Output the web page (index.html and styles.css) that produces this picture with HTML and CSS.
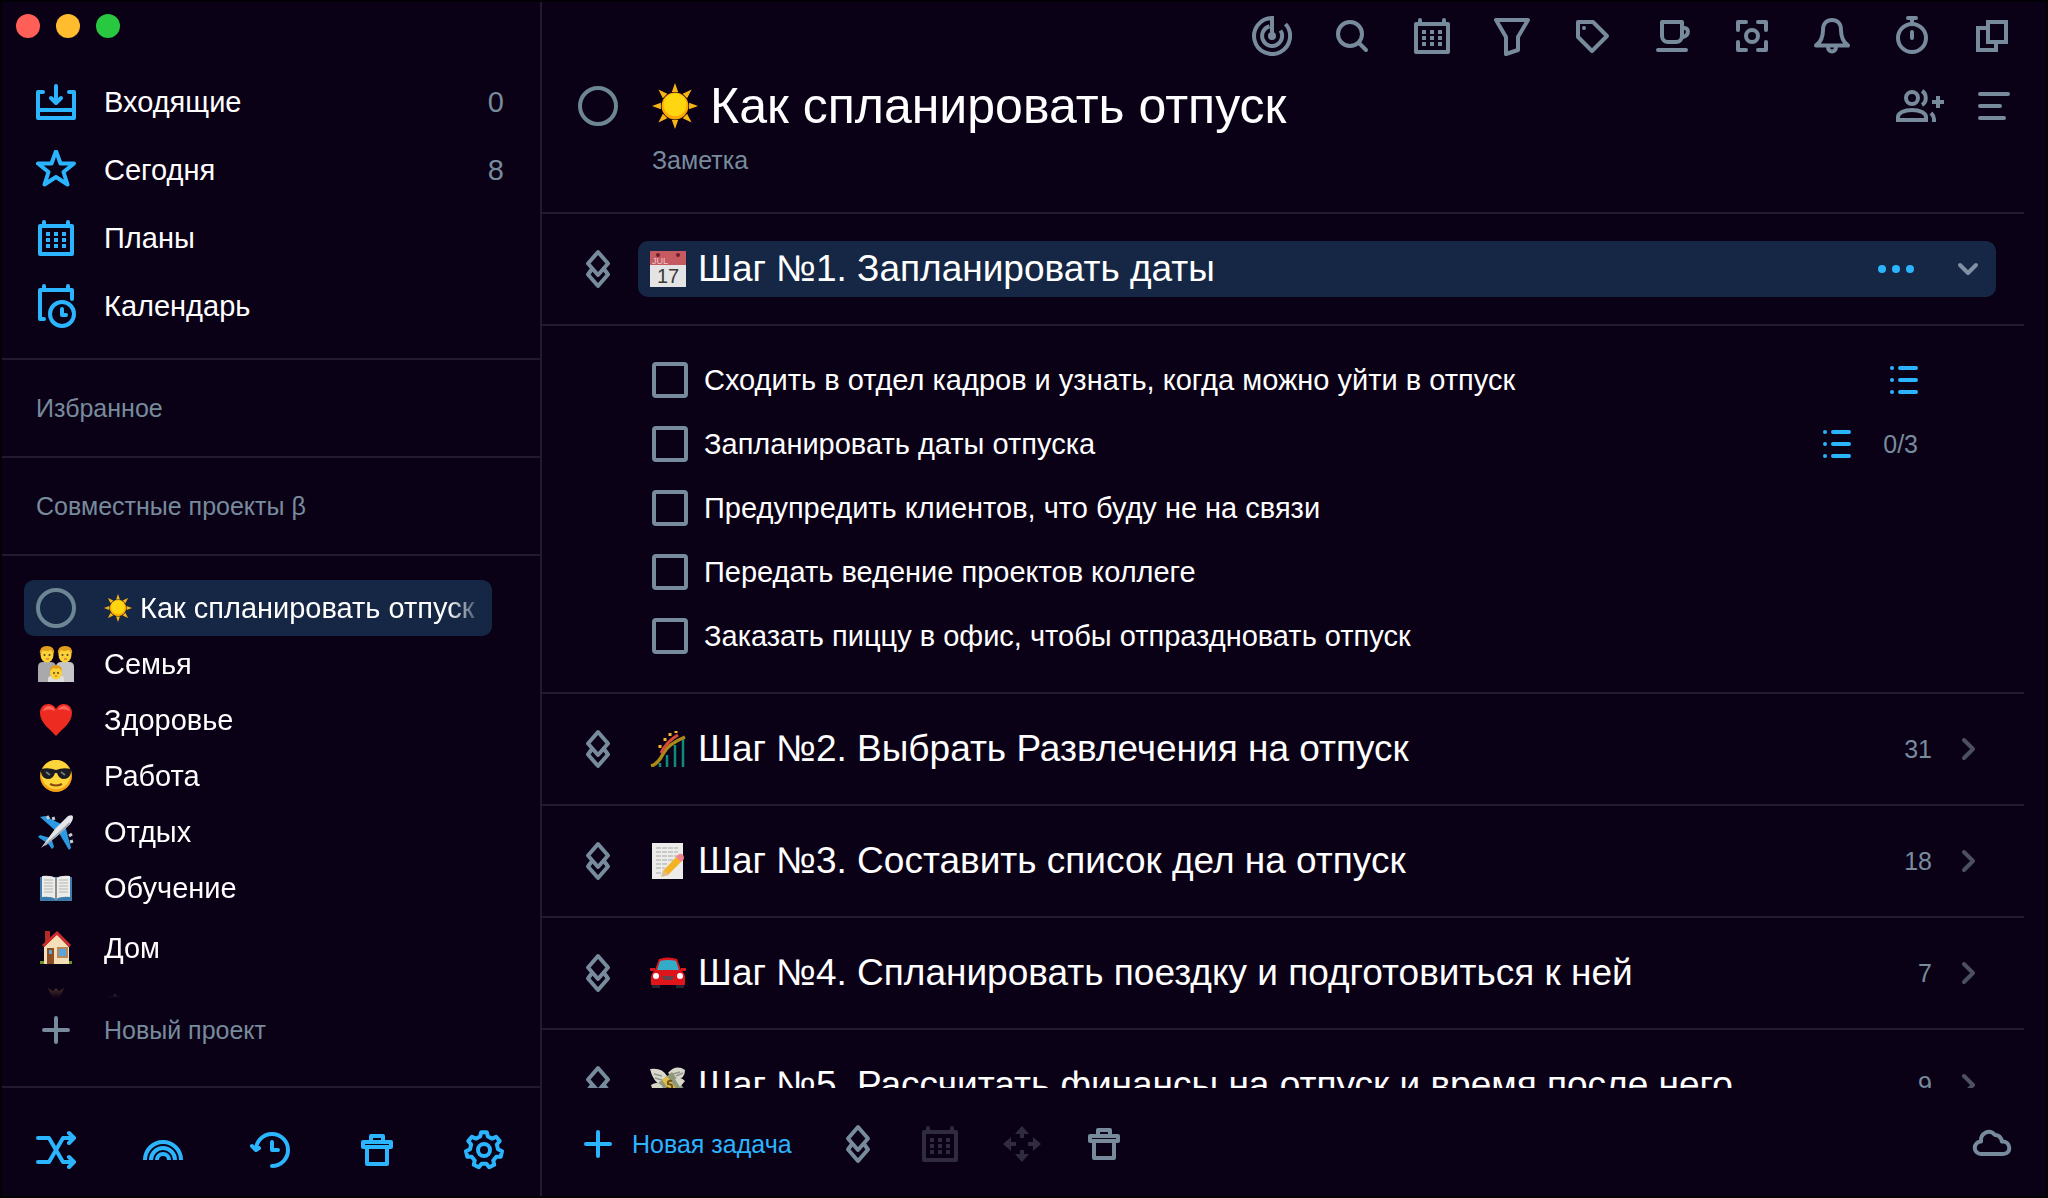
FILE: index.html
```html
<!DOCTYPE html>
<html lang="ru">
<head>
    <meta charset="UTF-8">
    <meta name="viewport" content="width=device-width, initial-scale=1.0">
    <title>Как спланировать отпуск</title>
    <link rel="stylesheet" href="styles.css">
</head>
<body>
    <!-- Набор иконок -->
    <svg class="sprite" aria-hidden="true">
        <symbol id="i-inbox" viewBox="0 0 40 40"><path d="M7 10H2v26h36V10h-5M2 28h36"/><path d="M20 4v16M15 16l5 5 5-5"/></symbol>
        <symbol id="i-star" viewBox="0 0 40 40"><path d="M20 1l4.500 12.500H38L27.500 22l4 12.500L20 27 8.500 34.500l4-12.500L2 13.500h13.500z"/></symbol>
        <symbol id="i-cal" viewBox="0 0 40 40"><path d="M4 8h32v28H4zM8 4v4M32 4v4"/><path class="solid" d="M10 14h4v4h-4zM18 14h4v4h-4zM26 14h4v4h-4zM10 20h4v4h-4zM18 20h4v4h-4zM26 20h4v4h-4zM10 26h4v4h-4zM18 26h4v4h-4zM26 26h4v4h-4z"/></symbol>
        <symbol id="i-schedule" viewBox="0 0 40 40" overflow="visible"><path d="M8 33H4V4h32v9M8 0v4M32 0v4"/><circle cx="26" cy="28" r="12"/><path d="M26 23v6h4"/></symbol>
        <symbol id="i-plus" viewBox="0 0 40 40"><path d="M20 8v24M8 20h24"/></symbol>
        <symbol id="i-shuffle" viewBox="0 0 40 40"><path d="M2 8h11l14 24h11M2 32h11L27 8h11M33 3l5 5-5 5M33 27l5 5-5 5"/></symbol>
        <symbol id="i-rainbow" viewBox="0 0 40 40"><path class="flat" d="M2 30a18 18 0 0 1 36 0M8 30a12 12 0 0 1 24 0M14 30a6 6 0 0 1 12 0"/></symbol>
        <symbol id="i-history" viewBox="0 0 40 40"><path d="M6 20a16 16 0 1 1 16 16M2 16l4 4 3-2M22 12v8h6"/></symbol>
        <symbol id="i-trash" viewBox="0 0 40 40"><path d="M6 12h28v5H6zM14 11V6h12v5M10 18v16h20V18"/></symbol>
        <symbol id="i-gear" viewBox="0 0 40 40"><path d="M17.200 2.200L22.800 2.200 23.900 6.500 28.100 8.600 32.100 6.700 35.700 11.100 32.900 14.600 34 19.200 38 21.200 36.700 26.700 32.300 26.800 29.300 30.500 30.200 34.800 25.200 37.200 22.400 33.800 17.600 33.800 14.800 37.200 9.800 34.800 10.700 30.500 7.700 26.800 3.300 26.700 2 21.200 6 19.200 7.100 14.600 4.300 11.100 7.900 6.700 11.900 8.600 16.100 6.500z"/><circle cx="20" cy="20" r="6"/></symbol>
        <symbol id="i-radar" viewBox="0 0 40 40"><path class="flat" d="M20 20V2A18 18 0 1 0 33.500 8M17.500 10.300A10 10 0 1 0 28.500 14.500"/><circle class="solid" cx="20" cy="20" r="4"/></symbol>
        <symbol id="i-search" viewBox="0 0 40 40"><circle cx="18" cy="18" r="12"/><path d="M27 27l7 7"/></symbol>
        <symbol id="i-filter" viewBox="0 0 40 40"><path d="M4 4h32L26 21v13l-12 4V21z"/></symbol>
        <symbol id="i-tag" viewBox="0 0 40 40"><path d="M6 6h15l14 14-15 15L6 21z"/><circle class="solid" cx="12" cy="12" r="2"/></symbol>
        <symbol id="i-cup" viewBox="0 0 40 40"><path d="M10 6h20v14a6 6 0 0 1-6 6h-8a6 6 0 0 1-6-6zM31 12c6-1 7 7 0 9M6 34h28"/></symbol>
        <symbol id="i-focus" viewBox="0 0 40 40"><path d="M14 6H6v8M26 6h8v8M14 34H6v-8M26 34h8v-8"/><circle cx="20" cy="20" r="6"/></symbol>
        <symbol id="i-bell" viewBox="0 0 40 40"><path d="M4 29.500C9 26 11 21 11 14c0-7 4-10 9-10s9 3 9 10c0 7 2 12 7 15.500zM16 31c0 6 8 6 8 0"/></symbol>
        <symbol id="i-timer" viewBox="0 0 40 40"><circle cx="20" cy="22" r="14"/><path d="M16 2h8M20 2v6M20 16v6"/></symbol>
        <symbol id="i-windows" viewBox="0 0 40 40"><path class="flat" d="M16 6h18v20H16zM15 12H6v22h18v-7"/></symbol>
        <symbol id="i-people" viewBox="0 0 48 40"><circle cx="16" cy="12" r="6"/><path class="flat" d="M2 34v-3c0-4 6-7 14-7s14 3 14 7v3zM42 10v12M36 16h12M38 36v-3c0-2-1-4-3-6M26 5c5 3 5 11 0 14"/></symbol>
        <symbol id="i-menu" viewBox="0 0 40 40"><path d="M8 8h28M8 20h20M8 32h24"/></symbol>
        <symbol id="i-step" viewBox="0 0 40 40"><path d="M20 3l10 11.500L20 26 10 14.500zM14 20l-4 5.500L20 37l10-11.500-4-5.500"/></symbol>
        <symbol id="i-list" viewBox="0 0 28 28"><path d="M10 2h16M10 14h16M10 26h16M2 2h.01M2 14h.01M2 26h.01"/></symbol>
        <symbol id="i-dots" viewBox="0 0 40 40"><g class="solid"><circle cx="6" cy="20" r="4"/><circle cx="20" cy="20" r="4"/><circle cx="34" cy="20" r="4"/></g></symbol>
        <symbol id="i-down" viewBox="0 0 40 40"><path d="M12 16l8 8 8-8"/></symbol>
        <symbol id="i-right" viewBox="0 0 40 40"><path d="M16 11l9 9-9 9"/></symbol>
        <symbol id="i-move" viewBox="0 0 40 40"><path class="solid" d="M20 2l7 8h-5v4h-4v-4h-5zM20 38l-7-8h5v-4h4v4h5zM1 20l8-7v5h5v4H9v5zM39 20l-8 7v-5h-5v-4h5v-5z"/></symbol>
        <symbol id="i-cloud" viewBox="0 0 40 40"><path d="M9 30a6 6 0 0 1 0-12.500C8 10 17 4 23 11c4 0 6 2 7 6.500C39 17 40 30 31 30z"/></symbol>

        <!-- Цветные значки -->
        <symbol id="e-sun" viewBox="0 0 36 36"><path fill="#f7b416" d="M18 0l2.500 7h-5zM18 36l2.500-7h-5zM0 18l7-2.500v5zM36 18l-7-2.500v5zM5 5l7 3.500L8.500 12zM31 5l-7 3.500 3.500 3.500zM5 31l7-3.500L8.500 24zM31 31l-7-3.500 3.500-3.500z"/><circle cx="18" cy="18" r="10.500" fill="#ffa800"/><circle cx="18" cy="17" r="9" fill="#ffd60f"/></symbol>
        <symbol id="e-family" viewBox="0 0 36 36"><path fill="#a9a9ab" d="M0 36V21q0-5 5-5h8q4 0 5 4v16z"/><path fill="#c6c6c8" d="M18 36V20q1-4 5-4h8q5 0 5 5v15z"/><path fill="#dededf" d="M10 36v-3q0-3 3-3h10q3 0 3 3v3z"/><g fill="#fbd137"><ellipse cx="9" cy="8.500" rx="6.500" ry="8"/><ellipse cx="27" cy="8.500" rx="6.500" ry="8"/><ellipse cx="18" cy="26.500" rx="6" ry="7"/></g><path fill="#e09d1b" d="M2 8q-1-8 7-8t7 8l-3-4q-5 2-8 0zM20 8q-1-8 7-8t7 8l-3-4q-5 2-8 0zM12 25q0-6 6-6t6 6l-3-3q-3 1-6 0z"/><g fill="#59401c"><circle cx="6.500" cy="9" r="1"/><circle cx="11.500" cy="9" r="1"/><circle cx="24.500" cy="9" r="1"/><circle cx="29.500" cy="9" r="1"/><circle cx="16" cy="27" r="1"/><circle cx="20" cy="27" r="1"/></g><path stroke="#c1592b" stroke-width="1.200" d="M8 13h3M26 13h3M17 30h2"/></symbol>
        <symbol id="e-heart" viewBox="0 0 36 36"><path fill="#ee2b20" d="M18 34C12 27 2 21 2 11 2 1 14-1 18 7c4-8 16-6 16 4 0 10-10 16-16 23z"/><path fill="#ff665c" d="M5 9q1-5 6-5t6 5q-6-3-12 0zM20 8q2-4 6-4t6 5q-6-3-12-1z"/></symbol>
        <symbol id="e-cool" viewBox="0 0 36 36"><circle cx="18" cy="18" r="16" fill="#f5a314"/><circle cx="18" cy="16.500" r="14.500" fill="#ffd53c"/><path fill="#1b1c22" d="M3 11q8-2 15 1 7-3 15-1v3q-1 7-7 7-5 0-7-6h-2q-2 6-7 6-6 0-7-7z"/><path stroke="#70757e" stroke-width="2" d="M8 14l4 3M23 14l4 3"/><path stroke="#8b4a11" stroke-width="2" fill="none" d="M12 26q6 3 12 0"/></symbol>
        <symbol id="e-plane" viewBox="0 0 36 36"><path fill="#2a9be2" d="M2 3l5-1 18 9-6 7zM33 34l-2 2-10-17 6-8zM0 23l2-2 10 3-3 5zM14 35l2-2-3-10-5 4z"/><path stroke="#c4ccd3" stroke-width="3" d="M9 2l2 3M15 3l1 3M34 20l-3 2M35 27l-3 1"/><path fill="#e4e6e8" d="M3 34l14-19L30 2q5-2 5 1 0 4-4 8L18 23z"/><path stroke="#a3a9af" stroke-width="2" d="M7 31l12-10L32 9"/></symbol>
        <symbol id="e-book" viewBox="0 0 36 36"><path fill="#3b7cab" d="M2 7h32v24H2z"/><path fill="#ececea" d="M4 6q9-1 14 2 5-3 14-2v21q-9-1-14 2-5-3-14-2z"/><path fill="#8b8c8e" d="M17 8h2v22h-2z"/><path stroke="#b4b4b4" stroke-width="1" d="M6 10h9M6 13h9M6 16h9M6 19h9M6 22h9M21 10h9M21 13h9M21 16h9M21 19h9M21 22h9"/></symbol>
        <symbol id="e-house" viewBox="0 0 36 36"><path fill="#68952a" d="M2 31h32v3H2z"/><path fill="#b22c26" d="M7 1h5v12H7z"/><path fill="#f5dfb9" d="M6 17L19 4l12 13v17H6z"/><path fill="none" stroke="#ce2b2b" stroke-width="3" d="M5 16L19 3l13 13"/><path fill="#8d4e25" d="M9 18h7v16H9z"/><path fill="#b98859" d="M19 17h11v11H19z"/><path fill="#5ca5dc" d="M21 19h7v7h-7zM11 20h3v4h-3z"/></symbol>
        <symbol id="e-money" viewBox="0 0 36 36"><path fill="#b58354" d="M10 2l5 3 3-3 3 3 5-3-4 9q11 9 9 19-1 5-13 5T5 30q-2-10 9-19z"/></symbol>
        <symbol id="e-coaster" viewBox="0 0 36 36"><path stroke="#118a7e" stroke-width="2.500" d="M10 32v4M17 24v12M25 14v22M33 7v29"/><path fill="none" stroke="#a98a16" stroke-width="3.500" d="M1 35q7-2 12-12T35 6"/><path fill="none" stroke="#d94b34" stroke-width="3" d="M11 22Q17 10 28 4"/><path stroke="#f5b62a" stroke-width="3" d="M10 17v-3M15 10V7M20 5V2M26 2V0"/></symbol>
        <symbol id="e-memo" viewBox="0 0 36 36"><path fill="#ececea" d="M2 0h31v36H2z"/><path stroke="#a5a5a5" stroke-width="1.200" stroke-dasharray="5 1" d="M6 5h22M6 9h22M6 13h23M6 17h22M6 21h12M6 25h9M6 30h6"/><path fill="#f4b325" d="M13 28L28 12l5 5-15 15z"/><path fill="#f1848e" d="M26 14l3-3q5-1 5 5l-3 3z"/><path fill="#dfbd88" d="M11 34l2-7 6 5z"/></symbol>
        <symbol id="e-car" viewBox="0 0 36 36"><path fill="#242733" d="M2 26h8v7H2zM26 26h8v7h-8z"/><path fill="#de151a" d="M9 4q9-3 18 0l4 11q4 3 4 8v7H1v-7q0-5 4-8zM0 13h5v3H0zM31 13h5v3h-5z"/><path fill="#33acca" d="M10 6q8-2 16 0l3 9H7z"/><path fill="#64454b" d="M12 21h12l-2 4h-8z"/><circle cx="6" cy="21" r="3" fill="#fff"/><circle cx="30" cy="21" r="3" fill="#fff"/></symbol>
        <symbol id="e-cash" viewBox="0 0 36 36"><path fill="#d8d9ca" d="M0 2q12-2 17 7l-5 10Q3 15 0 2zM18 6q8-9 17-3 0 8-8 10z"/><path fill="#90987a" d="M7 17L22 5l13 18-16 12z"/><path fill="#d6d7c6" d="M1 18q8-5 12 3l-3 6Q3 26 1 18zM25 12q6-3 10 2l-5 6z"/><path fill="#e3bd46" d="M12 13l5-4 13 18-5 4z"/><path stroke="#94968b" stroke-width="1.500" fill="none" d="M4 7l8 2M5 11l7 2M23 7l7-2M26 9l7-3"/><path stroke="#6c531c" stroke-width="2" fill="none" d="M22 14q-5-1-4 3 5 0 4 4-3 2-5-1"/></symbol>
    </svg>

    <div class="app">
        <aside class="sidebar">
            <div class="window-controls">
                <button class="dot dot-close" aria-label="Закрыть"></button>
                <button class="dot dot-min" aria-label="Свернуть"></button>
                <button class="dot dot-max" aria-label="Развернуть"></button>
            </div>

            <nav class="main-nav">
                <a class="nav-item" href="#"><svg class="icon"><use href="#i-inbox"/></svg><span>Входящие</span><span class="count">0</span></a>
                <a class="nav-item" href="#"><svg class="icon"><use href="#i-star"/></svg><span>Сегодня</span><span class="count">8</span></a>
                <a class="nav-item" href="#"><svg class="icon"><use href="#i-cal"/></svg><span>Планы</span></a>
                <a class="nav-item" href="#"><svg class="icon"><use href="#i-schedule"/></svg><span>Календарь</span></a>
            </nav>

            <h2 class="section-title">Избранное</h2>
            <h2 class="section-title">Совместные проекты β</h2>

            <div class="projects">
                <div class="project-scroll">
                    <ul class="project-list">
                        <li class="project active">
                            <input class="round-check" type="checkbox" aria-label="Завершить проект">
                            <a class="project-name" href="#"><svg class="emoji-small"><use href="#e-sun"/></svg>Как спланировать отпуск</a>
                        </li>
                        <li class="project"><svg class="emoji"><use href="#e-family"/></svg><a class="project-name" href="#">Семья</a></li>
                        <li class="project"><svg class="emoji"><use href="#e-heart"/></svg><a class="project-name" href="#">Здоровье</a></li>
                        <li class="project"><svg class="emoji"><use href="#e-cool"/></svg><a class="project-name" href="#">Работа</a></li>
                        <li class="project"><svg class="emoji"><use href="#e-plane"/></svg><a class="project-name" href="#">Отдых</a></li>
                        <li class="project"><svg class="emoji"><use href="#e-book"/></svg><a class="project-name" href="#">Обучение</a></li>
                    </ul>
                    <ul class="project-list">
                        <li class="project"><svg class="emoji"><use href="#e-house"/></svg><a class="project-name" href="#">Дом</a></li>
                        <li class="project"><svg class="emoji"><use href="#e-money"/></svg><a class="project-name" href="#">Финансы</a></li>
                    </ul>
                </div>
                <button class="new-project"><svg class="icon"><use href="#i-plus"/></svg>Новый проект</button>
            </div>

            <div class="sidebar-footer">
                <button aria-label="Перемешать"><svg class="icon"><use href="#i-shuffle"/></svg></button>
                <button aria-label="Радуга"><svg class="icon"><use href="#i-rainbow"/></svg></button>
                <button aria-label="История"><svg class="icon"><use href="#i-history"/></svg></button>
                <button aria-label="Корзина"><svg class="icon"><use href="#i-trash"/></svg></button>
                <button aria-label="Настройки"><svg class="icon"><use href="#i-gear"/></svg></button>
            </div>
        </aside>

        <main class="content">
            <div class="toolbar">
                <button aria-label="Радар"><svg class="icon"><use href="#i-radar"/></svg></button>
                <button aria-label="Поиск"><svg class="icon"><use href="#i-search"/></svg></button>
                <button aria-label="Календарь"><svg class="icon"><use href="#i-cal"/></svg></button>
                <button aria-label="Фильтр"><svg class="icon"><use href="#i-filter"/></svg></button>
                <button aria-label="Теги"><svg class="icon"><use href="#i-tag"/></svg></button>
                <button aria-label="Перерыв"><svg class="icon"><use href="#i-cup"/></svg></button>
                <button aria-label="Фокус"><svg class="icon"><use href="#i-focus"/></svg></button>
                <button aria-label="Уведомления"><svg class="icon"><use href="#i-bell"/></svg></button>
                <button aria-label="Таймер"><svg class="icon"><use href="#i-timer"/></svg></button>
                <button aria-label="Новое окно"><svg class="icon"><use href="#i-windows"/></svg></button>
            </div>

            <header class="project-header">
                <div class="title-row">
                    <input class="round-check" type="checkbox" aria-label="Завершить проект">
                    <h1><svg class="emoji-large"><use href="#e-sun"/></svg>Как спланировать отпуск</h1>
                    <button aria-label="Добавить участника"><svg class="icon icon-wide"><use href="#i-people"/></svg></button>
                    <button aria-label="Меню"><svg class="icon"><use href="#i-menu"/></svg></button>
                </div>
                <input class="note" type="text" placeholder="Заметка" aria-label="Заметка">
            </header>

            <div class="steps">
                <section class="step">
                    <svg class="icon"><use href="#i-step"/></svg>
                    <div class="step-bar active">
                        <svg class="emoji" viewBox="0 0 36 36">
                            <path fill="#e4e4e4" d="M0 1h36v35H0z"/>
                            <path fill="#c55a61" d="M0 0h36v14H0z"/>
                            <circle cx="8" cy="4" r="2" fill="#6b2029"/>
                            <circle cx="28" cy="4" r="2" fill="#6b2029"/>
                            <text class="date-month" x="2" y="13">JUL</text>
                            <text class="date-day" x="18" y="32">17</text>
                        </svg>
                        <h2>Шаг №1. Запланировать даты</h2>
                        <button class="more" aria-label="Ещё"><svg class="icon"><use href="#i-dots"/></svg></button>
                        <button class="toggle open" aria-label="Свернуть"><svg class="icon"><use href="#i-down"/></svg></button>
                    </div>
                </section>

                <ul class="tasks">
                    <li class="task">
                        <input type="checkbox" id="task1"><label for="task1">Сходить в отдел кадров и узнать, когда можно уйти в отпуск</label>
                        <svg class="list-icon"><use href="#i-list"/></svg>
                    </li>
                    <li class="task">
                        <input type="checkbox" id="task2"><label for="task2">Запланировать даты отпуска</label>
                        <svg class="list-icon"><use href="#i-list"/></svg><span class="count">0/3</span>
                    </li>
                    <li class="task"><input type="checkbox" id="task3"><label for="task3">Предупредить клиентов, что буду не на связи</label></li>
                    <li class="task"><input type="checkbox" id="task4"><label for="task4">Передать ведение проектов коллеге</label></li>
                    <li class="task"><input type="checkbox" id="task5"><label for="task5">Заказать пиццу в офис, чтобы отпраздновать отпуск</label></li>
                </ul>

                <section class="step">
                    <svg class="icon"><use href="#i-step"/></svg>
                    <div class="step-bar">
                        <svg class="emoji"><use href="#e-coaster"/></svg>
                        <h2>Шаг №2. Выбрать Развлечения на отпуск</h2>
                        <span class="count">31</span>
                        <button class="toggle" aria-label="Развернуть"><svg class="icon"><use href="#i-right"/></svg></button>
                    </div>
                </section>
                <section class="step">
                    <svg class="icon"><use href="#i-step"/></svg>
                    <div class="step-bar">
                        <svg class="emoji"><use href="#e-memo"/></svg>
                        <h2>Шаг №3. Составить список дел на отпуск</h2>
                        <span class="count">18</span>
                        <button class="toggle" aria-label="Развернуть"><svg class="icon"><use href="#i-right"/></svg></button>
                    </div>
                </section>
                <section class="step">
                    <svg class="icon"><use href="#i-step"/></svg>
                    <div class="step-bar">
                        <svg class="emoji"><use href="#e-car"/></svg>
                        <h2>Шаг №4. Спланировать поездку и подготовиться к ней</h2>
                        <span class="count">7</span>
                        <button class="toggle" aria-label="Развернуть"><svg class="icon"><use href="#i-right"/></svg></button>
                    </div>
                </section>
                <section class="step">
                    <svg class="icon"><use href="#i-step"/></svg>
                    <div class="step-bar">
                        <svg class="emoji"><use href="#e-cash"/></svg>
                        <h2>Шаг №5. Рассчитать финансы на отпуск и время после него</h2>
                        <span class="count">9</span>
                        <button class="toggle" aria-label="Развернуть"><svg class="icon"><use href="#i-right"/></svg></button>
                    </div>
                </section>
            </div>

            <footer class="actions">
                <button class="new-task"><svg class="icon"><use href="#i-plus"/></svg>Новая задача</button>
                <button aria-label="Новый шаг"><svg class="icon"><use href="#i-step"/></svg></button>
                <button aria-label="Дата" disabled><svg class="icon"><use href="#i-cal"/></svg></button>
                <button aria-label="Переместить" disabled><svg class="icon"><use href="#i-move"/></svg></button>
                <button aria-label="Удалить"><svg class="icon"><use href="#i-trash"/></svg></button>
                <button class="sync" aria-label="Синхронизация"><svg class="icon"><use href="#i-cloud"/></svg></button>
            </footer>
        </main>
    </div>
</body>
</html>
```
FILE: styles.css
```css
:root {
    --bg: #0b0117;
    --line: #231a30;
    --active: #152744;
    --blue: #2cb5ff;
    --grey: #778b9c;
    --dim: #302b3f;
}

* {
    box-sizing: border-box;
}

body {
    margin: 0;
    background: var(--bg);
    color: #fff;
    font-family: "Liberation Sans", Arial, sans-serif;
    font-size: 29px;
    line-height: 40px;
}

h1, h2, ul {
    margin: 0;
    padding: 0;
    font-weight: 400;
    list-style: none;
}

a {
    color: inherit;
    text-decoration: none;
}

button {
    display: flex;
    align-items: center;
    padding: 0;
    border: 0;
    background: none;
    color: inherit;
    font: inherit;
}

.sprite {
    position: absolute;
    width: 0;
    height: 0;
}

/* Иконки */
.icon {
    flex: none;
    width: 40px;
    height: 40px;
    overflow: visible;
}

.icon-wide {
    width: 48px;
}

.icon, .list-icon {
    fill: none;
    stroke: currentColor;
    stroke-width: 4;
    stroke-linecap: round;
    stroke-linejoin: round;
}

.solid {
    fill: currentColor;
    stroke: none;
}

.flat {
    stroke-linecap: butt;
    stroke-linejoin: miter;
}

.emoji {
    flex: none;
    width: 36px;
    height: 36px;
}

.emoji-small {
    flex: none;
    width: 28px;
    height: 28px;
}

.emoji-large {
    flex: none;
    width: 46px;
    height: 46px;
}

.date-month {
    fill: #f0c5c9;
    font-size: 9px;
}

.date-day {
    fill: #3b3b3b;
    font-size: 20px;
    text-anchor: middle;
}

.count {
    color: var(--grey);
}

.round-check {
    appearance: none;
    flex: none;
    width: 40px;
    height: 40px;
    margin: 0;
    border: 4px solid #6c8793;
    border-radius: 50%;
}

.app {
    display: grid;
    grid-template-columns: 540px minmax(0, 1fr);
    height: 100vh;
    border: 2px solid #030006;
}

/* Боковая панель */
.sidebar {
    display: flex;
    flex-direction: column;
    min-height: 0;
    border-right: 2px solid var(--line);
}

.window-controls {
    display: flex;
    gap: 16px;
    padding: 12px 14px 30px;
}

.dot {
    width: 24px;
    height: 24px;
    border-radius: 50%;
}

.dot-close {
    background: #ff5f57;
}

.dot-min {
    background: #febc2e;
}

.dot-max {
    background: #28c840;
}

.main-nav {
    padding-bottom: 18px;
}

.nav-item {
    display: flex;
    align-items: center;
    gap: 28px;
    height: 68px;
    padding: 0 36px 0 34px;
}

.nav-item .icon, .sidebar-footer {
    color: var(--blue);
}

.nav-item .count {
    margin-left: auto;
}

.section-title {
    padding: 28px 34px;
    border-top: 2px solid var(--line);
    color: var(--grey);
    font-size: 25px;
}

.projects {
    display: flex;
    flex: 1;
    flex-direction: column;
    min-height: 0;
    padding: 24px 48px 28px 22px;
    border-top: 2px solid var(--line);
}

.project-scroll {
    display: flex;
    flex: 1;
    flex-direction: column;
    gap: 4px;
    min-height: 0;
    overflow: hidden;
    mask-image: linear-gradient(to top, transparent, #000 28px);
}

.project {
    display: flex;
    align-items: center;
    gap: 28px;
    height: 56px;
    padding: 0 8px 0 12px;
}

.project .emoji {
    margin: 0 2px;
}

.project.active {
    border-radius: 10px;
    background: var(--active);
}

.project-name {
    display: flex;
    flex: 1;
    align-items: center;
    gap: 8px;
    min-width: 0;
    overflow: hidden;
    white-space: nowrap;
}

.active .project-name {
    mask-image: linear-gradient(to left, transparent, #000 36px);
}

.new-project {
    gap: 28px;
    height: 56px;
    margin-top: 4px;
    padding-left: 12px;
    color: var(--grey);
    font-size: 25px;
}

.sidebar-footer {
    display: flex;
    justify-content: space-between;
    height: 110px;
    padding: 42px 36px 0 34px;
    border-top: 2px solid var(--line);
}

.sidebar-footer button {
    height: 40px;
}

/* Основная область */
.content {
    display: flex;
    flex-direction: column;
    min-height: 0;
}

.toolbar {
    display: flex;
    justify-content: flex-end;
    gap: 40px;
    padding: 14px 34px 22px;
    color: var(--grey);
}

.project-header {
    padding: 0 34px 32px 36px;
    color: var(--grey);
}

.title-row {
    display: flex;
    align-items: center;
    height: 56px;
}

.title-row h1 {
    display: flex;
    flex: 1;
    align-items: center;
    gap: 12px;
    padding-left: 34px;
    color: #fff;
    font-size: 50px;
    line-height: 56px;
}

.title-row button {
    margin-left: 28px;
}

.note {
    display: block;
    width: 50%;
    height: 40px;
    margin: 6px 0 0 74px;
    padding: 0;
    border: 0;
    outline: 0;
    background: none;
    color: var(--grey);
    font: inherit;
    font-size: 25px;
}

.note::placeholder {
    color: var(--grey);
    opacity: 1;
}

.steps {
    flex: 1;
    min-height: 0;
    margin-right: 22px;
    overflow: hidden;
}

.step {
    display: flex;
    align-items: center;
    gap: 20px;
    height: 112px;
    padding: 0 28px 0 36px;
    border-top: 2px solid var(--line);
    color: var(--grey);
}

.step-bar {
    display: flex;
    flex: 1;
    align-items: center;
    gap: 12px;
    height: 56px;
    padding: 0 8px 0 12px;
    border-radius: 10px;
}

.step-bar.active {
    background: var(--active);
}

.step-bar h2 {
    flex: 1;
    color: #fff;
    font-size: 37px;
}

.step-bar .count, .task .count {
    font-size: 25px;
}

.step-bar .count {
    margin-right: 4px;
}

.more {
    margin-right: 20px;
    color: var(--blue);
}

.toggle {
    color: #4b5163;
}

.toggle.open {
    color: #8190a3;
}

.tasks {
    padding: 22px 106px 24px 110px;
    border-top: 2px solid var(--line);
}

.task {
    display: flex;
    align-items: center;
    gap: 16px;
    height: 64px;
}

.task input {
    appearance: none;
    flex: none;
    width: 36px;
    height: 36px;
    margin: 0;
    border: 4px solid var(--grey);
    border-radius: 4px;
}

.task label {
    flex: 1;
}

.list-icon {
    width: 28px;
    height: 28px;
    overflow: visible;
    color: var(--blue);
}

.task .count {
    margin-left: 16px;
}

/* Нижняя панель действий */
.actions {
    display: flex;
    align-items: center;
    gap: 42px;
    height: 108px;
    padding: 4px 34px 0 36px;
    color: var(--grey);
}

.actions button:disabled {
    color: var(--dim);
}

.new-task {
    gap: 14px;
    color: var(--blue);
    font-size: 25px;
}

.actions .new-task {
    margin-right: 4px;
}

.sync {
    margin-left: auto;
}
```
